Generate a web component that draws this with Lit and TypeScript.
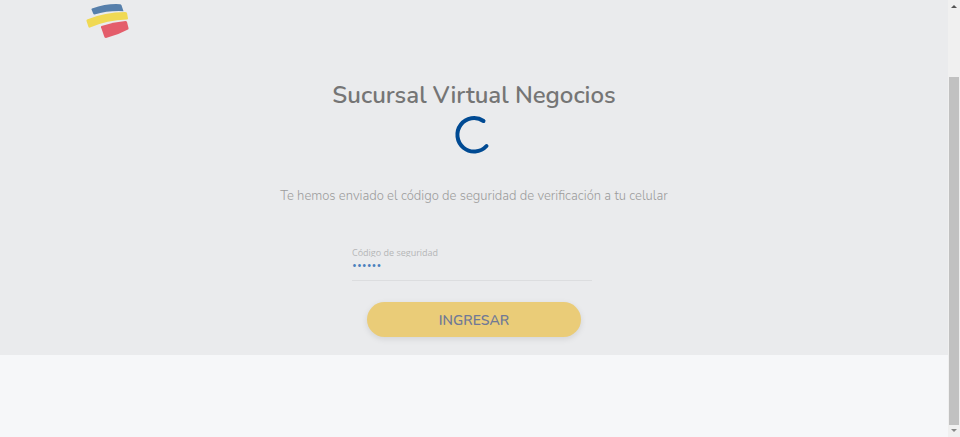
import { LitElement, html, css } from "lit";
import { customElement } from "lit/decorators.js";

@customElement("app-root")
export class AppRoot extends LitElement {
  static styles = css`
    :host {
      display: flex;
      min-height: 100vh;
      background: #f6f7f9;
      font-family: Nunito, Lato, "Open Sans", sans-serif;
    }
    .page {
      flex: 1;
      min-width: 0;
    }
    .panel {
      background: #eaebed;
      padding-bottom: 18px;
    }
    .header {
      display: flex;
      padding: 3px 9% 0;
    }
    .logo {
      display: block;
      width: 44px;
      height: 36px;
    }
    .content {
      display: flex;
      flex-direction: column;
      align-items: center;
      padding-top: 40px;
      text-align: center;
    }
    .title {
      margin: 0;
      font-size: 24px;
      line-height: 32px;
      font-weight: 600;
      color: #757575;
    }
    .spinner {
      display: block;
      width: 40px;
      height: 40px;
      margin-top: 4px;
    }
    .message {
      margin: 32px 0 0;
      font-size: 13px;
      line-height: 18px;
      font-weight: 300;
      color: #9c9c9c;
    }
    .form {
      display: flex;
      flex-direction: column;
      align-items: center;
      margin-top: 41px;
    }
    .field {
      display: flex;
      flex-direction: column;
      width: 240px;
      margin-right: 4px;
      border-bottom: 1px solid #dcdddf;
      text-align: left;
    }
    .label {
      height: 11px;
      overflow: hidden;
      font-family: "Open Sans", sans-serif;
      font-size: 9px;
      line-height: 14px;
      color: #b5b6b7;
    }
    .input {
      box-sizing: border-box;
      height: 23px;
      padding: 0 0 7px;
      border: 0;
      outline: 0;
      background: transparent;
      font-family: "Open Sans", sans-serif;
      font-size: 13px;
      color: #4a80bd;
    }
    .submit {
      width: 214px;
      height: 35px;
      margin-top: 21px;
      padding: 2px 0 0;
      border: 0;
      border-radius: 18px;
      background: #eacc78;
      box-shadow: 0 2px 6px rgba(0, 0, 0, 0.1);
      font-family: inherit;
      font-size: 14px;
      font-weight: 600;
      color: #707996;
    }
    .scrollbar {
      display: flex;
      flex-direction: column;
      align-items: center;
      width: 12px;
      background: #f0f0f0;
    }
    .arrow {
      display: block;
      width: 12px;
      height: 12px;
    }
    .track {
      display: flex;
      flex-direction: column;
      flex: 1;
      width: 10px;
    }
    .before {
      flex: 65;
    }
    .thumb {
      flex: 348;
      background: #c1c1c1;
    }
  `;

  render() {
    return html`
      <main class="page">
        <section class="panel">
          <header class="header">
            <svg class="logo" viewBox="0 0 44 36" aria-hidden="true">
              <path fill="#567fab" d="M7 5.500Q22 .3 35 1.200Q36 1.200 36.500 2.200L38.500 8.200Q23 7.500 9.500 11.500Q8.500 11.500 8.200 10.500L6.500 6.500Q6.300 5.800 7 5.500Z" />
              <path fill="#f0d954" d="M2 16.500Q20 9 40 9Q41.500 9 42 10L43 15.500Q43 16.500 42 16.500Q22 17 5 24.500Q4 25 3.500 24L1.500 18Q1.200 17 2 16.500Z" />
              <path fill="#e45d6b" d="M16.500 23Q28 19 40.500 18Q41.500 18 42 19L43.500 25Q43.700 26 43 26.500Q33 32 21 35Q20 35 19.500 34.200L16 24.200Q15.700 23.300 16.500 23Z" />
            </svg>
          </header>
          <div class="content">
            <h1 class="title">Sucursal Virtual Negocios</h1>
            <svg class="spinner" viewBox="0 0 40 40" role="img" aria-label="Cargando">
              <path fill="none" stroke="#004a93" stroke-width="4" stroke-linecap="round" d="M29.500 6A16.700 16.700 0 1 0 32.500 31" />
            </svg>
            <p class="message">
              Te hemos enviado el código de seguridad de verificación a tu celular
            </p>
            <form class="form" @submit=${(e: Event) => e.preventDefault()}>
              <div class="field">
                <label class="label" for="code">Código de seguridad</label>
                <input class="input" id="code" type="password" value="123456" />
              </div>
              <button class="submit" type="submit">INGRESAR</button>
            </form>
          </div>
        </section>
      </main>
      <div class="scrollbar" aria-hidden="true">
        <svg class="arrow" viewBox="0 0 12 12"><path fill="#555" d="M6 5L9 8H3Z" /></svg>
        <div class="track">
          <div class="before"></div>
          <div class="thumb"></div>
        </div>
        <svg class="arrow" viewBox="0 0 12 12"><path fill="#888" d="M3 4H9L6 7Z" /></svg>
      </div>
    `;
  }
}
